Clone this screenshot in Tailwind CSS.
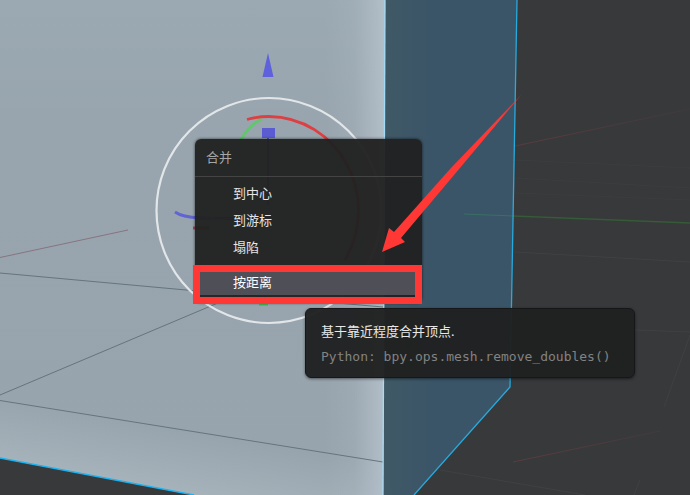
<!DOCTYPE html>
<html lang="zh-CN">
<head>
    <meta charset="UTF-8">
    <meta name="viewport" content="width=device-width, initial-scale=1.0">
    <title>合并</title>
    <script src="https://cdn.jsdelivr.net/npm/@tailwindcss/browser@4"></script>
</head>
<body class="bg-[#38393b] font-['Noto_Sans','Noto_Sans_CJK_SC',sans-serif] text-[13px] text-[#e6e6e6]">

    <main class="relative min-h-screen overflow-hidden">

        <!-- 3D viewport -->
        <svg class="absolute inset-0 w-full h-full" viewBox="0 0 690 495" preserveAspectRatio="xMinYMin slice" fill="none" aria-hidden="true">
            <defs>
                <linearGradient id="edgeRight" gradientUnits="userSpaceOnUse" x1="325" y1="0" x2="384" y2="0">
                    <stop offset="0" stop-color="#b4c0ca" stop-opacity="0"/>
                    <stop offset="0.5" stop-color="#b4c0ca" stop-opacity="0.2"/>
                    <stop offset="1" stop-color="#b4c0ca" stop-opacity="0.9"/>
                </linearGradient>
                <linearGradient id="edgeBottom" gradientUnits="userSpaceOnUse" x1="100" y1="415" x2="89" y2="475">
                    <stop offset="0" stop-color="#a8b4bc" stop-opacity="0"/>
                    <stop offset="1" stop-color="#a8b4bc" stop-opacity="0.9"/>
                </linearGradient>
                <linearGradient id="face" x1="0" y1="0" x2="0" y2="1">
                    <stop offset="0" stop-color="#9ba9b2"/>
                    <stop offset="0.25" stop-color="#98a5ae"/>
                    <stop offset="1" stop-color="#97a4ad"/>
                </linearGradient>
                <linearGradient id="side" gradientUnits="userSpaceOnUse" x1="384" y1="0" x2="430" y2="0">
                    <stop offset="0" stop-color="#405966"/>
                    <stop offset="1" stop-color="#3b5568"/>
                </linearGradient>
                <linearGradient id="redFade" gradientUnits="userSpaceOnUse" x1="515" y1="0" x2="690" y2="0">
                    <stop offset="0" stop-color="#5a3b3f"/>
                    <stop offset="1" stop-color="#5a3b3f" stop-opacity="0.2"/>
                </linearGradient>
            </defs>

            <!-- floor grid -->
            <path d="M515 146 690 109" stroke="url(#redFade)"/>
            <path d="M513 462 660 431" stroke="url(#redFade)"/>
            <path d="M515 252 690 262M635 330 690 332M690 335 664 407M440 470 585 495M640 480 634 495" stroke="#404143"/>
            <path d="M515 160 690 168M515 178 690 188M515 193 690 200" stroke="#3c3d3f"/>

            <!-- cube -->
            <path d="M385 0H517L510 387 414 495H383Z" fill="url(#side)"/>
            <path d="M0 0H385L383 495H194L0 458Z" fill="url(#face)"/>
            <path d="M0 0H385L383 495H194L0 458Z" fill="url(#edgeBottom)"/>
            <path d="M0 0H385L383 495H194L0 458Z" fill="url(#edgeRight)"/>
            <path d="M464 214 514 216" stroke="#397067"/>
            <path d="M513 216 690 223" stroke="#355b38" stroke-width="1.3"/>
            <path d="M0 273 186 290 383 307M0 395 232 297 270 281M0 400.5 383 462" stroke="#65747d"/>
            <path d="M0 257.5 128 230" stroke="#87747f"/>
            <path d="M385 0 383 495" stroke="#a4dcf8" stroke-width="1.3"/>
            <path d="M517 0 510 387 414 495" stroke="#27aadd" stroke-width="1.3"/>
            <path d="M0 458 194 495" stroke="#1cb2ef" stroke-width="1.5"/>

            <!-- transform gizmo -->
            <circle cx="269" cy="210.5" r="112.5" stroke="#e2e6e9" stroke-width="2.2"/>
            <path d="M241 140Q249 125 262 119" stroke="#62c66d" stroke-width="3"/>
            <path d="M247 119.5Q257 116.5 269 116.5A90 94 0 0 1 345 260" stroke="#dd4043" stroke-width="2.8"/>
            <path d="M175 212Q182 217 200 218Q235 220 270 216" stroke="#6264d4" stroke-width="2.8"/>
            <path d="M268 138V205" stroke="#5255bb" stroke-width="2"/>
            <path d="M268 53 273.5 77H262.5Z" fill="#5f60db"/>
            <path d="M262 128h13v10h-13z" fill="#5b5cd2"/>
            <path d="M193 228h16" stroke="#a54a50" stroke-width="3"/>
            <path d="M259 304.5h9" stroke="#40b955" stroke-width="2"/>
        </svg>

        <!-- merge menu -->
        <div role="menu" aria-labelledby="menuTitle" class="absolute left-[195px] top-[139px] w-[227px] rounded-md bg-[#212121]/96 shadow-[0_0_3px_rgba(0,0,0,0.7)] pb-2">
            <h1 id="menuTitle" class="h-[38px] px-[11px] pt-2 leading-5 text-[#a6a6a6] border-b border-[#444444]">合并</h1>
            <div class="flex flex-col pt-[3px]">
                <button type="button" role="menuitem" class="h-[27px] pl-[38px] text-left hover:bg-[#4f4f58]">到中心</button>
                <button type="button" role="menuitem" class="h-[27px] pl-[38px] text-left hover:bg-[#4f4f58]">到游标</button>
                <button type="button" role="menuitem" class="h-[27px] pl-[38px] text-left hover:bg-[#4f4f58]">塌陷</button>
                <button type="button" role="menuitem" aria-describedby="tip" class="mt-[10px] mx-1 h-6 pl-[34px] text-left text-white bg-[#4f4f58]">按距离</button>
            </div>
        </div>

        <!-- tooltip -->
        <div id="tip" role="tooltip" class="absolute left-[305px] top-[308px] w-[330px] rounded-md border border-[#161718] bg-[#202121]/97 shadow-[0_1px_3px_rgba(0,0,0,0.5)] px-[15px] py-2">
            <p class="h-[26px] leading-[28px] text-[#e8e8e8]">基于靠近程度合并顶点.</p>
            <p class="h-[26px] leading-[28px] font-['DejaVu_Sans_Mono',monospace] text-[#828282] whitespace-nowrap">Python: bpy.ops.mesh.remove_doubles()</p>
        </div>

        <!-- red marker and arrow -->
        <div class="absolute left-[193px] top-[265px] w-[229px] h-[39px] border-[7px] border-[#ff3835] pointer-events-none"></div>
        <svg class="absolute left-[380px] top-[92px] w-[144px] h-[162px] pointer-events-none" viewBox="380 92 144 162" aria-hidden="true">
            <defs>
                <linearGradient id="arrow" gradientUnits="userSpaceOnUse" x1="500" y1="118" x2="522" y2="94">
                    <stop offset="0" stop-color="#ff3835"/>
                    <stop offset="1" stop-color="#ff3835" stop-opacity="0.5"/>
                </linearGradient>
            </defs>
            <path d="M522 94 454 175 401 238 405 242 382 252 389 228 394 232 451 168Z" fill="url(#arrow)"/>
        </svg>
    </main>

</body>
</html>
